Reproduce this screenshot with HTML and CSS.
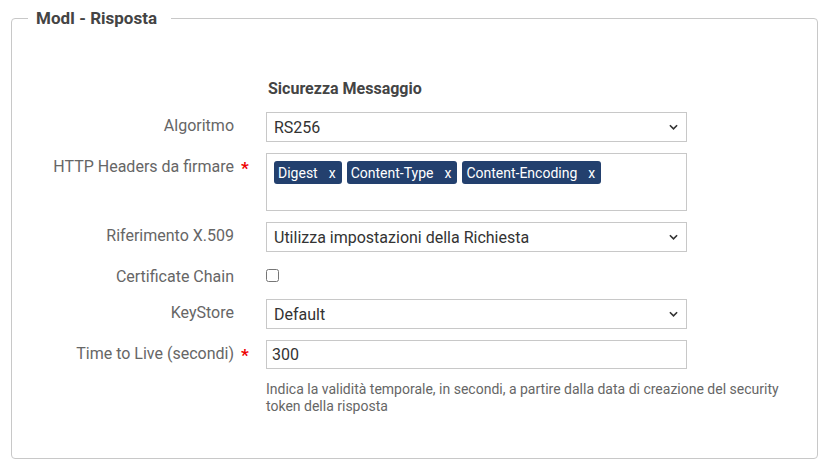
FILE: index.html
```html
<!DOCTYPE html>
<html lang="it">
<head>
<meta charset="utf-8">
<title>ModI - Risposta</title>
<link rel="stylesheet" href="styles.css">
</head>
<body>
<fieldset class="panel">
  <legend class="panel-title">ModI - Risposta</legend>
  <div class="section-head">
    <span class="spacer"></span>
    <span class="section-title">Sicurezza Messaggio</span>
  </div>

  <div class="row">
    <label class="lbl">Algoritmo</label>
    <span class="req"></span>
    <div class="field select"><span>RS256</span><svg class="chev" viewBox="0 0 10 6"><path d="M1 1l4 4 4-4" fill="none" stroke="#333" stroke-width="1.8"/></svg></div>
  </div>

  <div class="row">
    <label class="lbl">HTTP Headers da firmare</label>
    <span class="req">*</span>
    <div class="field tags">
      <span class="tag">Digest<span class="x">x</span></span>
      <span class="tag">Content-Type<span class="x">x</span></span>
      <span class="tag">Content-Encoding<span class="x">x</span></span>
    </div>
  </div>

  <div class="row">
    <label class="lbl">Riferimento X.509</label>
    <span class="req"></span>
    <div class="field select"><span>Utilizza impostazioni della Richiesta</span><svg class="chev" viewBox="0 0 10 6"><path d="M1 1l4 4 4-4" fill="none" stroke="#333" stroke-width="1.8"/></svg></div>
  </div>

  <div class="row row-check">
    <label class="lbl">Certificate Chain</label>
    <span class="req"></span>
    <div class="check-wrap"><input type="checkbox" class="check"></div>
  </div>

  <div class="row">
    <label class="lbl">KeyStore</label>
    <span class="req"></span>
    <div class="field select"><span>Default</span><svg class="chev" viewBox="0 0 10 6"><path d="M1 1l4 4 4-4" fill="none" stroke="#333" stroke-width="1.8"/></svg></div>
  </div>

  <div class="row">
    <label class="lbl">Time to Live (secondi)</label>
    <span class="req">*</span>
    <div class="field input"><span>300</span></div>
  </div>

  <div class="help-row">
    <span class="spacer spacer-help"></span>
    <p class="help">Indica la validità temporale, in secondi, a partire dalla data di creazione del security token della risposta</p>
  </div>
</fieldset>
</body>
</html>
```

FILE: styles.css
```css
html, body {
  margin: 0;
  padding: 0;
  background: #fff;
}
body {
  padding-top: 8px;
  font-family: Roboto, "Liberation Sans", sans-serif;
}
.panel {
  margin: 0 11px;
  padding: 0 0 43px 0;
  border: 1px solid #c8c8c8;
  border-radius: 4px;
  min-width: 0;
}
.panel-title {
  margin-left: 16px;
  padding: 0 14px 0 8px;
  font-size: 17px;
  line-height: 20px;
  font-weight: 700;
  color: #444;
}
.section-head {
  display: flex;
  margin-top: 51px;
  margin-bottom: 13px;
}
.spacer {
  width: 256px;
  flex: none;
}
.spacer-help {
  width: 254px;
}
.section-title {
  font-size: 16px;
  line-height: 20px;
  font-weight: 700;
  color: #444;
}
.row {
  display: flex;
  align-items: flex-start;
  margin-bottom: 11px;
}
.lbl {
  width: 222px;
  flex: none;
  text-align: right;
  font-size: 16px;
  line-height: 28px;
  color: #666;
}
.req {
  width: 32px;
  flex: none;
  padding-left: 7px;
  box-sizing: border-box;
  color: #e00;
  font-size: 17px;
  line-height: 30px;
  font-weight: 700;
}
.field {
  width: 421px;
  box-sizing: border-box;
  border: 1px solid #c8c8c8;
  background: #fff;
  font-size: 16px;
  color: #333;
}
.select {
  height: 30px;
  display: flex;
  align-items: center;
  justify-content: space-between;
  padding: 0 8px 0 7px;
}
.chev {
  width: 9px;
  height: 6px;
}
.input {
  height: 29px;
  display: flex;
  align-items: center;
  padding: 0 5px;
}
.tags {
  height: 58px;
  display: flex;
  align-items: flex-start;
  gap: 5px;
  padding: 7px 7px;
}
.tag {
  display: inline-flex;
  align-items: center;
  height: 23px;
  padding: 0 6px 0 4px;
  background: #23406e;
  color: #fff;
  border-radius: 3px;
  font-size: 14px;
}
.tag .x {
  margin-left: 11px;
}
.row-check {
  height: 25px;
}
.check-wrap {
  height: 25px;
  display: flex;
  align-items: center;
}
.check {
  margin: 0;
  width: 13px;
  height: 13px;
}
.help-row {
  display: flex;
}
.help {
  margin: 0;
  width: 530px;
  font-size: 14px;
  line-height: 17px;
  color: #666;
}
```
